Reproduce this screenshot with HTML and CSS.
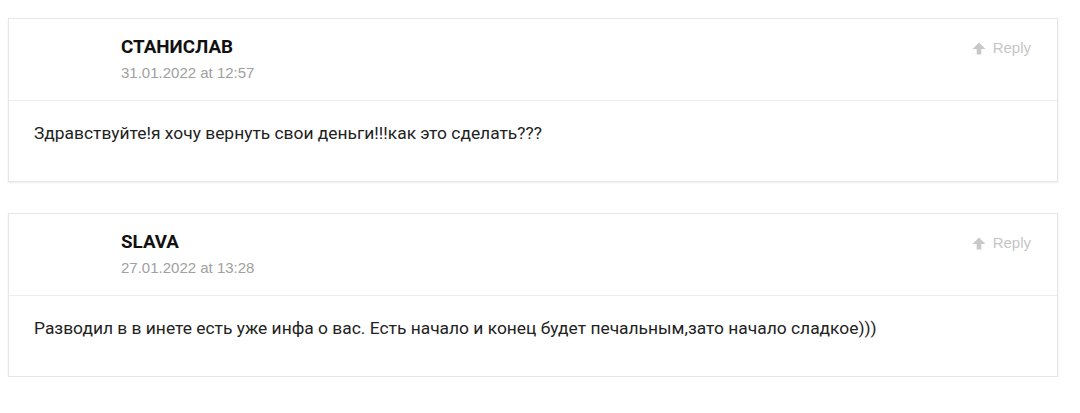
FILE: index.html
```html
<!DOCTYPE html>
<html>
<head>
<meta charset="utf-8">
<link rel="stylesheet" href="styles.css">
</head>
<body>
<div class="list">
  <div class="comment">
    <div class="head">
      <div class="meta">
        <div class="name">СТАНИСЛАВ</div>
        <div class="date">31.01.2022 at 12:57</div>
      </div>
      <a class="reply"><svg class="arr" viewBox="0 0 14 13" width="14" height="13"><path d="M7 0.5 L13.5 7 L9.3 7 L9.3 12.5 L4.7 12.5 L4.7 7 L0.5 7 Z" fill="#c8c8c8"/></svg>Reply</a>
    </div>
    <div class="body">Здравствуйте!я хочу вернуть свои деньги!!!как это сделать???</div>
  </div>
  <div class="comment">
    <div class="head">
      <div class="meta">
        <div class="name">SLAVA</div>
        <div class="date">27.01.2022 at 13:28</div>
      </div>
      <a class="reply"><svg class="arr" viewBox="0 0 14 13" width="14" height="13"><path d="M7 0.5 L13.5 7 L9.3 7 L9.3 12.5 L4.7 12.5 L4.7 7 L0.5 7 Z" fill="#c8c8c8"/></svg>Reply</a>
    </div>
    <div class="body">Разводил в в инете есть уже инфа о вас. Есть начало и конец будет печальным,зато начало сладкое)))</div>
  </div>
</div>
</body>
</html>
```
FILE: styles.css
```css
html, body { margin: 0; padding: 0; background: #fff; }
body { font-family: "Liberation Sans", Arial, sans-serif; }
.list { display: flex; flex-direction: column; gap: 31px; padding: 18px 22px 0 8px; }
.comment {
  border: 1px solid #e6e6e6;
  box-shadow: 0 1px 2px rgba(0,0,0,0.08);
  background: #fff;
}
.head {
  height: 82px;
  box-sizing: border-box;
  display: flex;
  justify-content: space-between;
  align-items: flex-start;
  padding: 17px 26px 0 112px;
  border-bottom: 1px solid #ececec;
}
.name { font-family: Roboto, sans-serif; font-weight: 700; font-size: 18.8px; line-height: 22px; color: #111; }
.date { font-size: 15px; line-height: 20px; margin-top: 5px; color: #a0a0a0; }
.reply { display: flex; align-items: center; gap: 7px; font-size: 15px; line-height: 20px; color: #c6c6c6; margin-top: 2px; }
.arr { display: block; }
.body {
  height: 80px;
  box-sizing: border-box;
  padding: 20px 25px 0 25px;
  font-family: Roboto, sans-serif;
  font-size: 17.4px;
  line-height: 24px;
  color: #222;
}
```
